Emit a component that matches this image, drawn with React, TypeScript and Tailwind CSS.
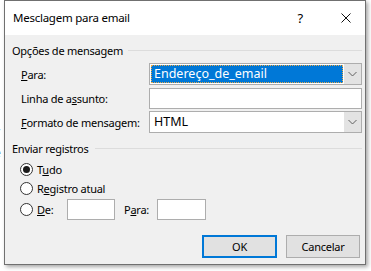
import React from "react";

function Chevron() {
  return (
    <svg width="9" height="6" viewBox="0 0 9 6" className="block">
      <path d="M0.5 1 L4.5 5 L8.5 1" fill="none" stroke="#606060" strokeWidth="1" />
    </svg>
  );
}

function Combo({ children, selected }: { children: React.ReactNode; selected?: boolean }) {
  return (
    <div className="flex h-[22px] w-[213px] border border-[#adadad] bg-white text-[12.5px] tracking-normal">
      <div className="flex flex-1 items-center p-[1px]">
        {selected ? (
          <div className="flex h-full w-full items-center border border-dotted border-[#e8a94a] bg-[#0078d7] pl-[2px] text-white">
            {children}
          </div>
        ) : (
          <div className="pl-[3px]">{children}</div>
        )}
      </div>
      <div className="flex w-[17px] items-center justify-center bg-[#e3e3e3]">
        <Chevron />
      </div>
    </div>
  );
}

function Radio({ checked }: { checked?: boolean }) {
  return (
    <div className="flex h-[13px] w-[13px] shrink-0 items-center justify-center rounded-full border border-[#333333] bg-white">
      {checked && <div className="h-[7px] w-[7px] rounded-full bg-[#1a1a1a]" />}
    </div>
  );
}

export default function App() {
  return (
    <div className="relative h-[271px] w-[371px] overflow-hidden whitespace-nowrap bg-white font-['Noto_Sans',sans-serif] text-[11px] leading-none tracking-[-0.25px] text-black">
      {/* document text behind the dialog */}
      <div className="absolute left-[-6px] top-[126px] flex flex-col text-[12px] text-[#222]">
        <span className="h-[21px]">v</span>
        <span className="h-[57px]">e</span>
        <span>r</span>
      </div>

      <div className="absolute left-[4px] top-0 flex h-[265px] w-[362px] flex-col border border-[#707070] bg-[#f0f0f0] shadow-[2px_2px_4px_rgba(0,0,0,0.35)]">
        {/* title bar */}
        <div className="flex h-[34px] items-center bg-white pl-[8px]">
          <span className="flex-1 text-[11.5px]">Mesclagem para email</span>
          <span className="mr-[38px] text-[13px]">?</span>
          <svg width="10" height="10" viewBox="0 0 10 10" className="mr-[14px]">
            <path d="M0.5 0.5 L9.5 9.5 M9.5 0.5 L0.5 9.5" stroke="#111" strokeWidth="1" />
          </svg>
        </div>

        <div className="flex flex-1 flex-col pl-[7px] pr-[3px]">
          {/* Opções de mensagem */}
          <div className="mt-[8px] flex h-[14px] items-center">
            <span>Opções de mensagem</span>
            <div className="ml-[5px] h-px flex-1 bg-[#dcdcdc]" />
          </div>

          <div className="mt-[6px] flex h-[22px] items-center">
            <span className="w-[137px] pl-[9px]">
              <span className="underline">P</span>ara:
            </span>
            <Combo selected>Endereço_de_email</Combo>
          </div>

          <div className="mt-[3px] flex h-[21px] items-center">
            <span className="w-[137px] pl-[9px]">
              Linha de a<span className="underline">s</span>sunto:
            </span>
            <div className="h-[21px] w-[213px] border border-[#adadad] bg-white" />
          </div>

          <div className="mt-[2px] flex h-[22px] items-center">
            <span className="w-[137px] pl-[9px]">
              <span className="underline">F</span>ormato de mensagem:
            </span>
            <Combo>HTML</Combo>
          </div>

          {/* Enviar registros */}
          <div className="mt-[8px] flex h-[14px] items-center">
            <span>Enviar registros</span>
            <div className="ml-[6px] h-px flex-1 bg-[#dcdcdc]" />
          </div>

          <div className="mt-[6px] flex h-[16px] items-center gap-[4px] pl-[8px]">
            <Radio checked />
            <span>
              T<span className="underline">u</span>do
            </span>
          </div>

          <div className="mt-[3px] flex h-[16px] items-center gap-[4px] pl-[8px]">
            <Radio />
            <span>
              R<span className="underline">e</span>gistro atual
            </span>
          </div>

          <div className="mt-[3px] flex h-[21px] items-center pl-[8px]">
            <Radio />
            <span className="ml-[4px] w-[30px]">
              <span className="underline">D</span>e:
            </span>
            <div className="h-[21px] w-[48px] border border-[#adadad] bg-white" />
            <span className="ml-[9px] w-[33px]">
              P<span className="underline">a</span>ra:
            </span>
            <div className="h-[21px] w-[49px] border border-[#adadad] bg-white" />
          </div>

          {/* buttons */}
          <div className="mt-[15px] flex justify-end gap-[9px] pr-[2px]">
            <button className="flex h-[23px] w-[75px] items-center justify-center border-2 border-[#0078d7] bg-[#e1e1e1]">
              OK
            </button>
            <button className="flex h-[23px] w-[74px] items-center justify-center border border-[#adadad] bg-[#e1e1e1]">
              Cancelar
            </button>
          </div>
        </div>
      </div>
    </div>
  );
}
